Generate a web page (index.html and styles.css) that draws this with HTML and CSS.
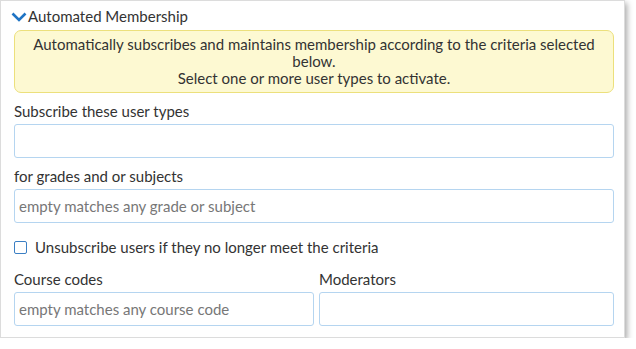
FILE: index.html
```html
<!DOCTYPE html>
<html lang="en">
<head>
  <meta charset="UTF-8" />
  <title>Automated Membership</title>
  <link rel="stylesheet" href="styles.css">
</head>
<body>
  <div class="panel">
    <div class="panel-title">
      <svg class="chevron" width="16" height="10" viewBox="0 0 16 10"><path d="M1.5 1.5 L8 8 L14.5 1.5" fill="none" stroke="#1f74c4" stroke-width="2.6"/></svg>
      <span>Automated Membership</span>
    </div>

    <div class="notice">
      Automatically subscribes and maintains membership according to the criteria selected below.<br>
      Select one or more user types to activate.
    </div>

    <label class="field-label">Subscribe these user types</label>
    <input class="field" type="text">

    <label class="field-label">for grades and or subjects</label>
    <input class="field" type="text" placeholder="empty matches any grade or subject">

    <label class="check-row">
      <input type="checkbox" class="check">
      <span>Unsubscribe users if they no longer meet the criteria</span>
    </label>

    <div class="columns">
      <div>
        <label class="field-label">Course codes</label>
        <input class="field" type="text" placeholder="empty matches any course code">
      </div>
      <div>
        <label class="field-label">Moderators</label>
        <input class="field" type="text">
      </div>
    </div>
  </div>
</body>
</html>
```

FILE: styles.css
```css
body {
  margin: 0;
  background: #fff;
  font-family: Lato, 'Open Sans', sans-serif;
  color: #333;
}
.panel {
  width: 625px;
  height: 338px;
  box-sizing: border-box;
  border: 1px solid #dcdcdc;
  padding: 5px 10px 0 13px;
  background: #fff;
  box-shadow: 2px 3px 6px rgba(0,0,0,0.35);
}
.panel-title {
  display: flex;
  align-items: center;
  height: 20px;
  margin-left: -2px;
  font-size: 15px;
}
.chevron {
  margin-left: -1px;
  margin-right: 1px;
  margin-top: 1px;
}
.notice {
  margin-top: 4px;
  background: #fdf9d2;
  border: 1px solid #ece07c;
  border-radius: 7px;
  padding: 5px 10px;
  text-align: center;
  font-size: 15px;
  line-height: 17px;
}
.field-label {
  display: block;
  margin-top: 9px;
  font-size: 15px;
  line-height: 18px;
}
.field {
  display: block;
  box-sizing: border-box;
  width: 100%;
  height: 34px;
  margin-top: 4px;
  padding: 0 4px;
  border: 1px solid #b5d5f0;
  border-radius: 3px;
  font-family: inherit;
  font-size: 15px;
  color: #333;
}
.field::placeholder {
  color: #777;
}
.check-row {
  display: flex;
  align-items: center;
  margin-top: 15px;
  font-size: 15px;
  line-height: 18px;
}
.check {
  appearance: none;
  width: 13px;
  height: 13px;
  margin: 0 8px 0 0;
  border: 1.5px solid #3b7fc4;
  border-radius: 2px;
  box-sizing: border-box;
}
.columns {
  display: grid;
  grid-template-columns: 300px 1fr;
  gap: 5px;
  margin-top: 5px;
}
```
